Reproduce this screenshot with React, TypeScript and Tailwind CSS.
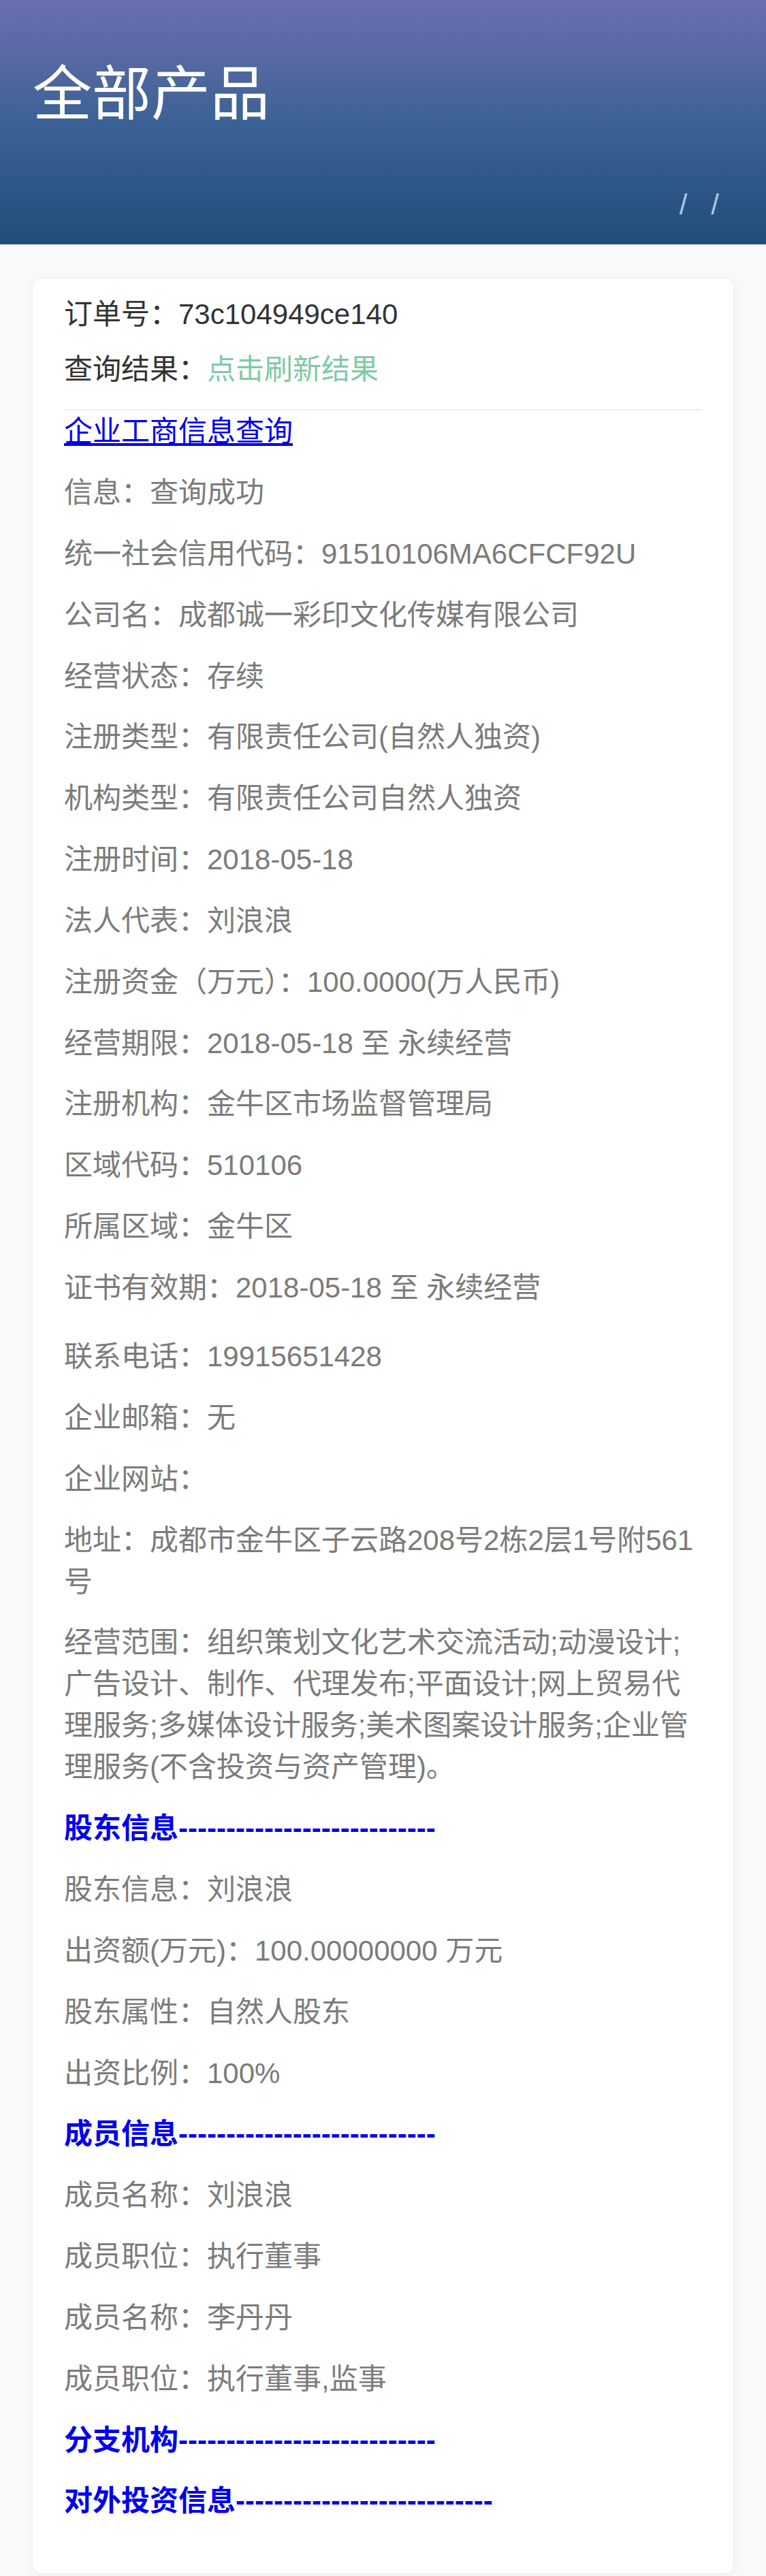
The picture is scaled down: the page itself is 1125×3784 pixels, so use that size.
import React from "react";

const font = { fontFamily: "'Liberation Sans', 'Noto Sans CJK SC', sans-serif" };

const group1 = [
  "统一社会信用代码：91510106MA6CFCF92U",
  "公司名：成都诚一彩印文化传媒有限公司",
  "经营状态：存续",
  "注册类型：有限责任公司(自然人独资)",
  "机构类型：有限责任公司自然人独资",
  "注册时间：2018-05-18",
  "法人代表：刘浪浪",
  "注册资金（万元）：100.0000(万人民币)",
  "经营期限：2018-05-18 至 永续经营",
  "注册机构：金牛区市场监督管理局",
  "区域代码：510106",
  "所属区域：金牛区",
];

const group2 = [
  "联系电话：19915651428",
  "企业邮箱：无",
  "企业网站：",
  "地址：成都市金牛区子云路208号2栋2层1号附561号",
  "经营范围：组织策划文化艺术交流活动;动漫设计;广告设计、制作、代理发布;平面设计;网上贸易代理服务;多媒体设计服务;美术图案设计服务;企业管理服务(不含投资与资产管理)。",
];

const dashes = "---------------------------";

function Gray({ children, extra = "" }: { children: React.ReactNode; extra?: string }) {
  return <p className={`text-[#7b7b7b] leading-[61px] mb-[28.85px] ${extra}`}>{children}</p>;
}

function Heading({ children }: { children: React.ReactNode }) {
  return (
    <p className="text-[#0000ee] font-bold leading-[61px] mb-[28.85px]">
      {children}
      {dashes}
    </p>
  );
}

export default function App() {
  return (
    <div className="w-[1125px] min-h-[3784px] bg-[#f8f9fb] pb-[6px]" style={font}>
      <header className="h-[359px] bg-gradient-to-b from-[#6b6eb0] via-[#3c6295] to-[#1f4d79] flex flex-col">
        <h1 className="text-white text-[87px] leading-[87px] pt-[95px] pl-[48px] font-normal">全部产品</h1>
        <div className="flex justify-end gap-[35px] pr-[69px] mt-[98px] text-[42px] leading-[42px] text-[#a9c8eb]">
          <span>/</span>
          <span>/</span>
        </div>
      </header>

      <main className="mx-[47px] mt-[49px] bg-white rounded-[14px] border border-[#eceef3] shadow-[0_2px_12px_rgba(0,0,0,0.05)] pt-[22px] pb-[47px] px-[46px] text-[42px]">
        <p className="text-[#333333] leading-[61px] mb-[20px]">订单号：73c104949ce140</p>
        <p className="text-[#333333] leading-[61px] mb-[28px]">
          查询结果：<span className="text-[#7ecaa5]">点击刷新结果</span>
        </p>
        <div className="h-[2px] bg-[#eeeeee]" />
        <p className="text-[#0000ee] underline leading-[61px] mb-[29px]">企业工商信息查询</p>
        <Gray>信息：查询成功</Gray>
        {group1.map((t) => (
          <Gray key={t}>{t}</Gray>
        ))}
        <Gray extra="!mb-[40px]">证书有效期：2018-05-18 至 永续经营</Gray>
        {group2.map((t) => (
          <Gray key={t}>{t}</Gray>
        ))}
        <Heading>股东信息</Heading>
        <Gray>股东信息：刘浪浪</Gray>
        <Gray>出资额(万元)：100.00000000 万元</Gray>
        <Gray>股东属性：自然人股东</Gray>
        <Gray>出资比例：100%</Gray>
        <Heading>成员信息</Heading>
        <Gray>成员名称：刘浪浪</Gray>
        <Gray>成员职位：执行董事</Gray>
        <Gray>成员名称：李丹丹</Gray>
        <Gray>成员职位：执行董事,监事</Gray>
        <Heading>分支机构</Heading>
        <Heading>对外投资信息</Heading>
      </main>
    </div>
  );
}
